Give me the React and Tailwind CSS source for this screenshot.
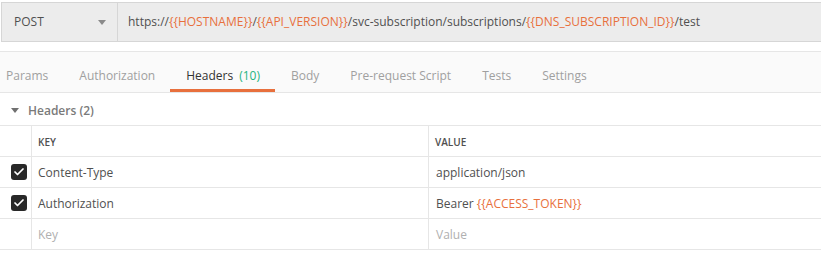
import { Check } from 'lucide-react'

const tabs = [
  { label: 'Params' },
  { label: 'Authorization' },
  { label: 'Headers', count: '(10)', active: true },
  { label: 'Body' },
  { label: 'Pre-request Script' },
  { label: 'Tests' },
  { label: 'Settings' },
]

const Var = ({ children }) => <span className="text-[#e8703d]">{`{{${children}}}`}</span>

function CheckBox() {
  return (
    <div className="w-[16px] h-[16px] rounded-[3px] bg-[#282828] flex items-center justify-center">
      <Check size={12} strokeWidth={3.5} className="text-white" />
    </div>
  )
}

function Row({ checked, k, v, placeholder }) {
  const tone = placeholder ? 'text-[#b0b0b0]' : 'text-[#505050]'
  return (
    <div className="flex h-[31px] border-b border-[#e6e6e6]">
      <div className="w-[32px] border-r border-[#e6e6e6] flex items-center justify-center pl-[6px]">
        {checked && <CheckBox />}
      </div>
      <div className={`w-[397px] border-r border-[#e6e6e6] flex items-center pl-[6px] pt-[2px] text-[12px] ${tone}`}>
        {k}
      </div>
      <div className={`flex-1 flex items-center pl-[7px] pt-[2px] text-[12px] ${tone}`}>{v}</div>
    </div>
  )
}

export default function App() {
  return (
    <div className="w-[821px] h-[257px] bg-white overflow-hidden font-['Open_Sans',sans-serif]">
      <div className="pt-[2px] pl-[1px]">
        <div className="flex h-[40px] bg-[#ececec] border border-r-0 border-[#d6d6d6]">
          <div className="w-[116px] border-r border-[#d6d6d6] flex items-center justify-between pl-[12px] pr-[11px] text-[12px] text-[#505050]">
            <span>POST</span>
            <svg width="8" height="5" viewBox="0 0 8 5">
              <path d="M0 0h8L4 5z" fill="#8a8a8a" />
            </svg>
          </div>
          <div className="flex items-center pl-[10px] text-[12px] text-[#505050] whitespace-nowrap">
            https://<Var>HOSTNAME</Var>/<Var>API_VERSION</Var>/svc-subscription/subscriptions/
            <Var>DNS_SUBSCRIPTION_ID</Var>/test
          </div>
        </div>
      </div>

      <div className="mt-[9px] h-[42px] bg-[#fafafa] border-y border-[#e6e6e6] flex items-stretch">
        {tabs.map((t, i) => (
          <div
            key={t.label}
            className={`relative flex items-center pt-[7px] text-[12px] whitespace-nowrap ${
              i === 0 ? 'pl-[6px] pr-[15px]' : 'pl-[16px] pr-[15px]'
            } ${t.active ? 'text-[#333333]' : 'text-[#a0a0a0]'}`}
          >
            {t.label}
            {t.count && <span className="ml-[6px] text-[#26b47f]">{t.count}</span>}
            {t.active && <div className="absolute left-0 right-0 bottom-[0px] h-[3px] bg-[#e8703d]" />}
          </div>
        ))}
      </div>

      <div className="h-[32px] flex items-center pl-[11px] pt-[3px] text-[12px] font-semibold text-[#7a7a7a]">
        <svg width="8" height="5" viewBox="0 0 8 5" className="mr-[9px]">
          <path d="M0 0h8L4 5z" fill="#707070" />
        </svg>
        Headers (2)
      </div>

      <div className="border-t border-[#e6e6e6]">
        <div className="flex h-[31px] border-b border-[#e6e6e6] text-[10px] font-semibold text-[#505050]">
          <div className="w-[32px] border-r border-[#e6e6e6]" />
          <div className="w-[397px] border-r border-[#e6e6e6] flex items-center pl-[6px] pt-[2px]">KEY</div>
          <div className="flex-1 flex items-center pl-[6px] pt-[2px]">VALUE</div>
        </div>
        <Row checked k="Content-Type" v="application/json" />
        <Row
          checked
          k="Authorization"
          v={
            <>
              Bearer&nbsp;<Var>ACCESS_TOKEN</Var>
            </>
          }
        />
        <Row placeholder k="Key" v="Value" />
      </div>
    </div>
  )
}
